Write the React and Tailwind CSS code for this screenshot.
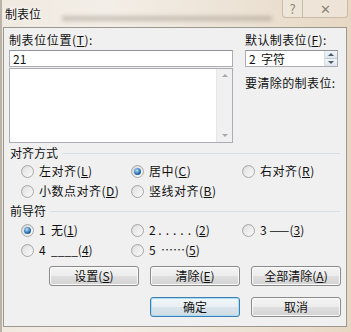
import React from 'react';

// Win7 style "制表位" (Tabs) dialog

const Radio = ({ checked }) => (
  <span className="w-[13px] h-[13px] shrink-0 rounded-full border border-[#a9a9a9] bg-[linear-gradient(135deg,#d4d4d4,#fbfbfb)] flex items-center justify-center">
    {checked ? (
      <span className="w-[7px] h-[7px] rounded-full bg-[radial-gradient(circle_at_40%_35%,#b9e3fa,#2a73b3_55%,#15406e)]" />
    ) : (
      <span className="w-[9px] h-[9px] rounded-full bg-[linear-gradient(135deg,#e2e2e2,#f7f7f7)]" />
    )}
  </span>
);

const Option = ({ checked, children }) => (
  <div className="flex items-center gap-[5px]">
    <Radio checked={checked} />
    <span className="leading-[16px] whitespace-nowrap">{children}</span>
  </div>
);

const Btn = ({ children, primary }) => (
  <div
    className={
      primary
        ? 'w-[90px] h-[20px] rounded-[3px] border border-[#3c7fb1] shadow-[inset_0_0_0_1px_#a9dcf5] bg-[linear-gradient(#f1f6f9_0%,#e8eff4_50%,#dae4eb_50%,#cfdbe4_100%)] flex items-center justify-center leading-[16px]'
        : 'w-[90px] h-[20px] rounded-[3px] border border-[#8a8a8a] shadow-[inset_0_0_0_1px_#fbfbfb] bg-[linear-gradient(#f4f4f4_0%,#ececec_50%,#dfdfdf_50%,#d3d3d3_100%)] flex items-center justify-center leading-[16px]'
    }
  >
    {children}
  </div>
);

const GroupLabel = ({ children }) => (
  <div className="flex items-center h-[16px] pl-[6px] pr-[6px]">
    <span className="leading-[16px]">{children}</span>
    <span className="flex-1 ml-[4px] border-t border-[#d5dfe5]" />
  </div>
);

export default function App() {
  return (
    <div className="relative w-[351px] h-[332px] overflow-hidden bg-[linear-gradient(90deg,#efe9e0,#f3eee7_30%,#ece2d4_70%,#e6d7c2)] font-['Noto_Sans_CJK_SC',sans-serif] text-[12px] text-[#111] flex flex-col border-l-2 border-[#b9b3aa]">
      {/* blurred content behind the glass */}
      <div className="absolute left-[60px] top-[16px] w-[210px] h-[5px] bg-[#8a7f74] opacity-40 blur-[2px]" />

      {/* title bar */}
      <div className="relative h-[27px] flex items-start shrink-0">
        <span className="pl-[3px] pt-[6px] leading-[16px] [text-shadow:0_0_6px_#fff,0_0_3px_#fff]">制表位</span>
        <div className="ml-auto mr-[3px] flex">
          <div className="w-[21px] h-[18px] border border-t-0 border-[#c9bba8] rounded-bl-[4px] bg-[#f1ebe2]/60 flex items-center justify-center text-[13px] leading-none text-[#8d8478]">?</div>
          <div className="w-[45px] h-[18px] border border-t-0 border-l-0 border-[#c9bba8] rounded-br-[4px] bg-[#f1ebe2]/60 flex items-center justify-center text-[13px] leading-none text-[#8d8478]">✕</div>
        </div>
      </div>

      {/* client area */}
      <div className="relative ml-[1px] w-[344px] h-[300px] border border-[#9c9890] bg-[#f0f0f0]">
        {/* top section */}
        <div className="flex pl-[5px] pt-[4px]">
          <div className="w-[224px]">
            <div className="h-[18px] leading-[16px] tracking-[0.6px]">
              制表位位置(<u>T</u>):
            </div>
            <div className="h-[17px] border border-[#abadb3] border-t-[#8f9399] bg-white px-[3px] leading-[15px]">21</div>
            <div className="mt-[1px] h-[75px] border border-[#abadb3] bg-white flex">
              <div className="flex-1" />
              <div className="w-[16px] bg-[#f0f0f0] border-l border-[#e6e6e6] flex flex-col items-center justify-between py-[5px]">
                <span className="w-0 h-0 border-l-[3px] border-r-[3px] border-b-[3px] border-l-transparent border-r-transparent border-b-[#a8a8a8]" />
                <span className="w-0 h-0 border-l-[3px] border-r-[3px] border-t-[3px] border-l-transparent border-r-transparent border-t-[#a8a8a8]" />
              </div>
            </div>
          </div>
          <div className="ml-[12px] w-[93px]">
            <div className="h-[18px] leading-[16px] whitespace-nowrap tracking-[0.4px]">
              默认制表位(<u>F</u>):
            </div>
            <div className="h-[17px] border border-[#abadb3] border-t-[#8f9399] bg-white flex">
              <span className="flex-1 pl-[3px] leading-[15px] whitespace-pre">2  字符</span>
              <div className="w-[13px] flex flex-col border-l border-[#d9dde2]">
                <div className="flex-1 bg-[linear-gradient(#f3f6f9,#dde5ee)] border-b border-[#c3cbd5] flex items-center justify-center">
                  <span className="w-0 h-0 border-l-[3px] border-r-[3px] border-b-[3px] border-l-transparent border-r-transparent border-b-[#4d5b6b]" />
                </div>
                <div className="flex-1 bg-[linear-gradient(#f3f6f9,#dde5ee)] flex items-center justify-center">
                  <span className="w-0 h-0 border-l-[3px] border-r-[3px] border-t-[3px] border-l-transparent border-r-transparent border-t-[#4d5b6b]" />
                </div>
              </div>
            </div>
            <div className="mt-[7px] leading-[18px] whitespace-nowrap tracking-[0.4px]">要清除的制表位:</div>
          </div>
        </div>

        {/* alignment */}
        <div className="mt-[2px]">
          <GroupLabel>对齐方式</GroupLabel>
          <div className="grid grid-cols-[110px_111px_1fr] pl-[17px] tracking-[0.5px]">
            <div className="h-[20px] flex items-center"><Option>左对齐(<u>L</u>)</Option></div>
            <div className="h-[20px] flex items-center"><Option checked>居中(<u>C</u>)</Option></div>
            <div className="h-[20px] flex items-center"><Option>右对齐(<u>R</u>)</Option></div>
            <div className="h-[20px] flex items-center"><Option>小数点对齐(<u>D</u>)</Option></div>
            <div className="h-[20px] flex items-center"><Option>竖线对齐(<u>B</u>)</Option></div>
          </div>
        </div>

        {/* leader */}
        <div className="mt-[2px]">
          <GroupLabel>前导符</GroupLabel>
          <div className="mt-[1px] grid grid-cols-[110px_111px_1fr] pl-[17px]">
            <div className="h-[20px] flex items-center"><Option checked><span className="whitespace-pre">1  无(<u>1</u>)</span></Option></div>
            <div className="h-[20px] flex items-center"><Option><span className="whitespace-pre">2 <span className="tracking-[4px]">.....</span>(<u>2</u>)</span></Option></div>
            <div className="h-[20px] flex items-center"><Option><span className="whitespace-pre">3 ——(<u>3</u>)</span></Option></div>
            <div className="h-[20px] flex items-center"><Option><span className="whitespace-pre">4  ____(<u>4</u>)</span></Option></div>
            <div className="h-[20px] flex items-center"><Option><span className="whitespace-pre">5  ……(<u>5</u>)</span></Option></div>
          </div>
        </div>

        {/* buttons */}
        <div className="mt-[6px] flex justify-end gap-[11px] pr-[5px]">
          <Btn>设置(<u>S</u>)</Btn>
          <Btn>清除(<u>E</u>)</Btn>
          <Btn>全部清除(<u>A</u>)</Btn>
        </div>
        <div className="mt-[11px] flex justify-end gap-[11px] pr-[5px]">
          <Btn primary>确定</Btn>
          <Btn>取消</Btn>
        </div>
      </div>
    </div>
  );
}
